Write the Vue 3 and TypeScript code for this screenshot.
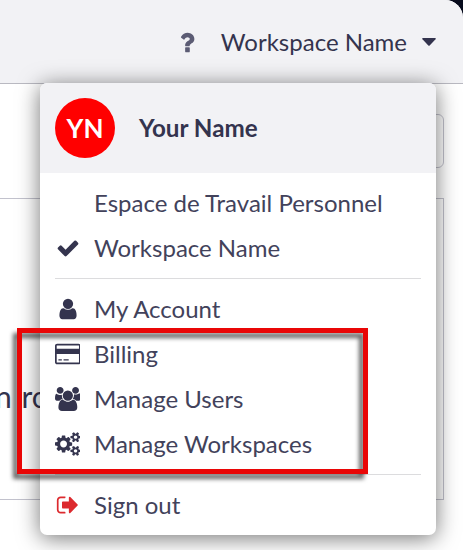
<script setup lang="ts">
interface Icon {
  box: string
  width: number
  height: number
  path: string
}

interface Entry {
  label: string
  icon?: Icon
  danger?: boolean
}

const icons: Record<string, Icon> = {
  question: {
    box: '0 0 1792 1792',
    width: 26,
    height: 27,
    path: 'M1088 1256v240q0 16-12 28t-28 12h-240q-16 0-28-12t-12-28v-240q0-16 12-28t28-12h240q16 0 28 12t12 28zm316-600q0 54-15.5 101t-35 76.5-55 59.5-57.5 43.5-61 35.5q-41 23-68.5 65t-27.5 67q0 17-12 32.5t-28 15.5h-240q-15 0-25.5-18.5t-10.5-37.5v-45q0-83 65-156.5t143-108.5q59-27 84-56t25-76q0-42-46.5-74t-107.5-32q-65 0-108 29-35 25-107 115-13 16-31 16-12 0-25-8l-164-125q-13-10-15.5-25t5.5-28q160-266 464-266 80 0 161 31t146 83 106 127.5 41 158.5z',
  },
  check: {
    box: '0 0 1792 1792',
    width: 24,
    height: 24,
    path: 'M1671 566q0 40-28 68l-724 724-136 136q-28 28-68 28t-68-28l-136-136-362-362q-28-28-28-68t28-68l136-136q28-28 68-28t68 28l294 295 656-657q28-28 68-28t68 28l136 136q28 28 28 68z',
  },
  user: {
    box: '0 0 1792 1792',
    width: 24,
    height: 24,
    path: 'M1536 1399q0 109-62.5 187t-150.5 78h-854q-88 0-150.5-78t-62.5-187q0-85 8.5-160.5t31.5-152 58.5-131 94-89 134.5-34.5q131 128 313 128t313-128q76 0 134.5 34.5t94 89 58.5 131 31.5 152 8.5 160.5zm-256-887q0 159-112.5 271.5t-271.5 112.5-271.5-112.5-112.5-271.5 112.5-271.5 271.5-112.5 271.5 112.5 112.5 271.5z',
  },
  card: {
    box: '0 0 1920 1792',
    width: 25.7,
    height: 24,
    path: 'M1760 128q66 0 113 47t47 113v1216q0 66-47 113t-113 47h-1600q-66 0-113-47t-47-113v-1216q0-66 47-113t113-47h1600zm-1600 128q-13 0-22.5 9.5t-9.5 22.5v224h1664v-224q0-13-9.5-22.5t-22.5-9.5h-1600zm1600 1280q13 0 22.5-9.5t9.5-22.5v-608h-1664v608q0 13 9.5 22.5t22.5 9.5h1600zm-1504-158v-98h256v98h-256zm384 0v-98h384v98h-384z',
  },
  users: {
    box: '64 0 1920 1792',
    width: 25.7,
    height: 24,
    path: 'M657 896q-162 5-265 128h-134q-82 0-138-40.5t-56-118.5q0-353 124-353 6 0 43.5 21t97.5 42.5 119 21.5q67 0 133-23-5 37-5 66 0 159 93 293zm1071 637q0 120-73 189.5t-194 69.5h-874q-121 0-194-69.5t-73-189.5q0-53 3.5-103.5t14-109 26.5-108.5 43-97.5 62-81 85.5-53.5 111.5-20q10 0 43 21.5t73 48 107 48 135 21.5 135-21.5 107-48 73-48 43-21.5q61 0 111.5 20t85.5 53.5 62 81 43 97.5 26.5 108.5 14 109 3.5 103.5zm-1024-1277q0 106-75 181t-181 75-181-75-75-181 75-181 181-75 181 75 75 181zm704 384q0 159-112.5 271.5t-271.5 112.5-271.5-112.5-112.5-271.5 112.5-271.5 271.5-112.5 271.5 112.5 112.5 271.5zm576 225q0 78-56 118.5t-138 40.5h-134q-103-123-265-128 93-134 93-293 0-29-5-66 66 23 133 23 59 0 119-21.5t97.5-42.5 43.5-21q124 0 124 353zm-128-609q0 106-75 181t-181 75-181-75-75-181 75-181 181-75 181 75 75 181z',
  },
  cogs: {
    box: '-64 0 1920 1792',
    width: 25.7,
    height: 24,
    path: 'M832 896q0-106-75-181t-181-75-181 75-75 181 75 181 181 75 181-75 75-181zm768 512q0-52-38-90t-90-38-90 38-38 90q0 53 37.5 90.5t90.5 37.5 90.5-37.5 37.5-90.5zm0-1024q0-52-38-90t-90-38-90 38-38 90q0 53 37.5 90.5t90.5 37.5 90.5-37.5 37.5-90.5zm-384 421v185q0 10-7 19.5t-16 10.5l-155 24q-11 35-32 76 34 48 90 115 7 11 7 20 0 12-7 19-23 30-82.5 89.5t-78.5 59.5q-11 0-21-7l-115-90q-37 19-77 31-11 108-23 155-7 24-30 24h-186q-11 0-20-7.5t-10-17.5l-23-153q-34-10-75-31l-118 89q-7 7-20 7-11 0-21-8-144-133-144-160 0-9 7-19 10-14 41-53t47-61q-23-44-35-82l-152-24q-10-1-17-9.5t-7-19.5v-185q0-10 7-19.5t16-10.5l155-24q11-35 32-76-34-48-90-115-7-11-7-20 0-12 7-20 22-30 82-89t79-59q11 0 21 7l115 90q34-18 77-32 11-108 23-154 7-24 30-24h186q11 0 20 7.5t10 17.5l23 153q34 10 75 31l118-89q8-7 20-7 11 0 21 8 144 133 144 160 0 8-7 19-12 16-42 54t-45 60q23 48 34 82l152 23q10 2 17 10.5t7 19.5zm640 533v140q0 16-149 31-12 27-30 52 51 113 51 138 0 4-4 7-122 71-124 71-8 0-46-47t-52-68q-20 2-30 2t-30-2q-14 21-52 68t-46 47q-2 0-124-71-4-3-4-7 0-25 51-138-18-25-30-52-149-15-149-31v-140q0-16 149-31 13-29 30-52-51-113-51-138 0-4 4-7 4-2 35-20t59-34 30-16q8 0 46 46.5t52 67.5q20-2 30-2t30 2q51-71 92-112l6-2q4 0 124 70 4 3 4 7 0 25-51 138 17 23 30 52 149 15 149 31zm0-1024v140q0 16-149 31-12 27-30 52 51 113 51 138 0 4-4 7-122 71-124 71-8 0-46-47t-52-68q-20 2-30 2t-30-2q-14 21-52 68t-46 47q-2 0-124-71-4-3-4-7 0-25 51-138-18-25-30-52-149-15-149-31v-140q0-16 149-31 13-29 30-52-51-113-51-138 0-4 4-7 4-2 35-20t59-34 30-16q8 0 46 46.5t52 67.5q20-2 30-2t30 2q51-71 92-112l6-2q4 0 124 70 4 3 4 7 0 25-51 138 17 23 30 52 149 15 149 31z',
  },
  signOut: {
    box: '0 0 1792 1792',
    width: 24,
    height: 24,
    path: 'M704 1440q0 4 1 20t.5 26.5-3 23.5-10 19.5-20.5 6.5h-320q-119 0-203.5-84.5t-84.5-203.5v-704q0-119 84.5-203.5t203.5-84.5h320q13 0 22.5 9.5t9.5 22.5q0 4 1 20t.5 26.5-3 23.5-10 19.5-20.5 6.5h-320q-66 0-113 47t-47 113v704q0 66 47 113t113 47h312l11.5 1 11.5 3 8 5.5 7 9 2 13.5zm928-544q0 26-19 45l-544 544q-19 19-45 19t-45-19-19-45v-288h-448q-26 0-45-19t-19-45v-384q0-26 19-45t45-19h448v-288q0-26 19-45t45-19 45 19l544 544q19 19 19 45z',
  },
}

const groups: Entry[][] = [
  [{ label: 'Espace de Travail Personnel' }, { label: 'Workspace Name', icon: icons.check }],
  [
    { label: 'My Account', icon: icons.user },
    { label: 'Billing', icon: icons.card },
    { label: 'Manage Users', icon: icons.users },
    { label: 'Manage Workspaces', icon: icons.cogs },
  ],
  [{ label: 'Sign out', icon: icons.signOut, danger: true }],
]
</script>

<template>
  <div class="window">
    <div class="page">
      <header class="topbar">
        <svg
          class="help"
          :width="icons.question.width"
          :height="icons.question.height"
          :viewBox="icons.question.box"
          preserveAspectRatio="none"
        >
          <path :d="icons.question.path" />
        </svg>
        <span class="workspace">Workspace Name</span>
        <svg class="caret" width="14" height="8" viewBox="0 0 14 8">
          <path d="M.9 0h12.200q1.200.3.4 1.200L7.700 7.400q-.7.6-1.400 0L.5 1.200Q-.3.3.9 0z" />
        </svg>
      </header>
      <main class="content">
        <div class="field"></div>
        <section class="panel"><p class="copy">n ro</p></section>
      </main>
    </div>

    <nav class="menu">
      <div class="profile">
        <span class="avatar">YN</span>
        <strong class="name">Your Name</strong>
      </div>
      <div class="groups">
        <ul v-for="(group, g) in groups" :key="g" class="group">
          <li v-for="entry in group" :key="entry.label" class="entry">
            <span class="slot" :class="{ danger: entry.danger }">
              <svg
                v-if="entry.icon"
                :width="entry.icon.width"
                :height="entry.icon.height"
                :viewBox="entry.icon.box"
              >
                <path :d="entry.icon.path" />
              </svg>
            </span>
            <span class="label">{{ entry.label }}</span>
          </li>
        </ul>
      </div>
    </nav>

    <div class="highlight"></div>
  </div>
</template>

<style>
body {
  background: #070b1c;
}
</style>

<style scoped>
.window {
  position: relative;
  box-sizing: border-box;
  height: 550px;
  overflow: hidden;
  color: #34344e;
  font-family: Lato, 'Liberation Sans', sans-serif;
  font-size: 24px;
}
.page {
  display: flex;
  flex-direction: column;
  height: 550px;
  overflow: hidden;
  border-top-right-radius: 18px;
  background: #fff;
}
.topbar {
  display: flex;
  box-sizing: border-box;
  align-items: center;
  justify-content: flex-end;
  height: 84px;
  padding: 1px 27px 0 0;
  border-bottom: 1px solid #b9b9c1;
  background: #f2f2f5;
}
svg {
  display: block;
  flex: none;
  fill: currentColor;
}
.help {
  margin-right: 21px;
  color: #5c5c74;
}
.workspace {
  line-height: 30px;
}
.caret {
  margin-left: 15px;
}
.content {
  padding: 30px 19px 0 0;
}
.field {
  box-sizing: border-box;
  width: 200px;
  height: 54px;
  margin-left: auto;
  border: 1px solid #c2c2cd;
  border-radius: 6px;
}
.panel {
  display: flex;
  box-sizing: border-box;
  align-items: center;
  height: 302px;
  margin-top: 30px;
  border: 1px solid #c2c2cd;
  border-left: 0;
}
.copy {
  margin: 93px 0 0 -5px;
  font-size: 30px;
  line-height: 36px;
  word-spacing: 2px;
}
.menu {
  position: absolute;
  top: 83px;
  left: 40px;
  width: 396px;
  height: 452px;
  border-radius: 7px;
  background: #fff;
  box-shadow: 0 3px 22px rgba(0, 0, 0, 0.55);
}
.profile {
  display: flex;
  box-sizing: border-box;
  align-items: center;
  height: 90px;
  padding: 0 15px;
  border-radius: 7px 7px 0 0;
  background: #f2f2f5;
}
.avatar {
  display: flex;
  align-items: center;
  justify-content: center;
  width: 60px;
  height: 60px;
  border-radius: 50%;
  background: #f00;
  color: #fff;
  font-size: 26px;
  font-weight: 700;
}
.name {
  margin-left: 24px;
  padding-bottom: 2px;
  font-size: 24.200px;
  font-weight: 700;
}
.groups {
  padding: 8px 15px 7px;
}
.group {
  margin: 0;
  padding: 0;
  list-style: none;
}
.group + .group {
  margin-top: 7px;
  padding-top: 8px;
  border-top: 1px solid #dcdcde;
}
.entry {
  display: flex;
  box-sizing: border-box;
  align-items: center;
  height: 45px;
  padding-bottom: 2px;
}
.slot {
  display: flex;
  justify-content: center;
  width: 25px;
  margin-right: 14px;
}
.slot.danger {
  color: #dc2a2e;
}
.label {
  color: #42425b;
  line-height: 30px;
  white-space: nowrap;
}
.highlight {
  position: absolute;
  top: 328px;
  left: 17px;
  box-sizing: border-box;
  width: 351px;
  height: 146px;
  border: 5px solid #e90606;
  filter: drop-shadow(-4px 5px 2px rgba(0, 0, 0, 0.6));
}
</style>
